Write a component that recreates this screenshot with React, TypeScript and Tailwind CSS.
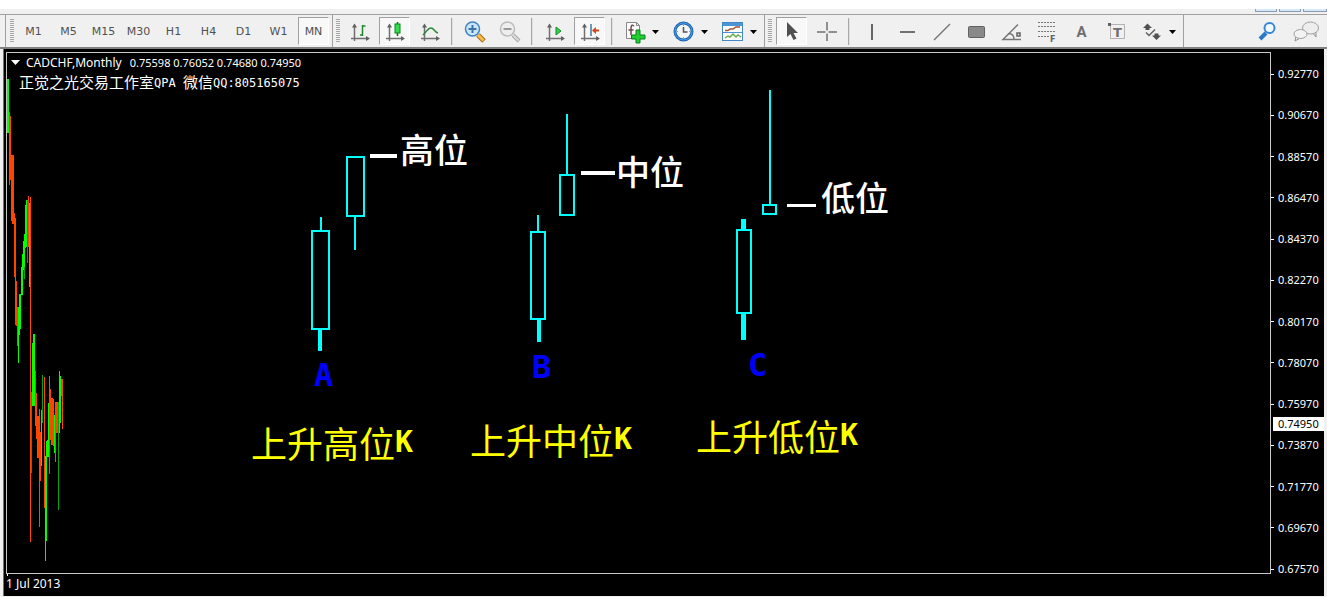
import type { ReactNode } from "react";

const timeframes = ["M1", "M5", "M15", "M30", "H1", "H4", "D1", "W1", "MN"];

const prices = [
  "0.92770", "0.90670", "0.88570", "0.86470", "0.84370", "0.82270", "0.80170",
  "0.78070", "0.75970", "0.73870", "0.71770", "0.69670", "0.67570",
];

const UP = "#00ff00";
const DOWN = "#ff4500";

// x, width, top, bottom, colour of each bar of the price history
const history: [number, number, number, number, string][] = [
  [0, 2, 26, 80, UP],
  [2, 1, 59, 132, DOWN],
  [3, 1, 63, 127, DOWN],
  [4, 1, 102, 168, DOWN],
  [5, 2, 102, 171, DOWN],
  [7, 1, 160, 224, DOWN],
  [8, 1, 165, 272, DOWN],
  [9, 1, 228, 273, DOWN],
  [10, 1, 254, 293, DOWN],
  [11, 1, 254, 310, UP],
  [12, 1, 241, 282, UP],
  [13, 1, 241, 276, UP],
  [14, 1, 214, 242, UP],
  [15, 1, 201, 242, UP],
  [16, 1, 188, 217, UP],
  [17, 1, 181, 214, UP],
  [17, 1, 214, 226, "#00a800"],
  [18, 1, 152, 195, UP],
  [19, 1, 147, 194, UP],
  [20, 1, 147, 210, "#00a800"],
  [21, 1, 143, 194, DOWN],
  [22, 1, 150, 234, UP],
  [23, 1, 144, 489, DOWN],
  [24, 1, 339, 420, "#00a800"],
  [25, 1, 290, 353, UP],
  [26, 2, 281, 353, UP],
  [28, 1, 318, 373, DOWN],
  [29, 1, 340, 386, DOWN],
  [30, 2, 363, 405, DOWN],
  [32, 1, 356, 474, DOWN],
  [33, 1, 379, 428, DOWN],
  [34, 1, 357, 413, UP],
  [35, 1, 322, 370, "#00a800"],
  [37, 1, 324, 455, DOWN],
  [38, 1, 403, 508, UP],
  [39, 1, 388, 488, UP],
  [40, 1, 387, 404, UP],
  [41, 1, 350, 404, UP],
  [42, 1, 323, 421, "#00c800"],
  [43, 1, 336, 387, DOWN],
  [44, 2, 345, 392, DOWN],
  [46, 1, 346, 393, DOWN],
  [47, 1, 362, 400, UP],
  [48, 1, 349, 409, DOWN],
  [49, 2, 349, 380, DOWN],
  [51, 1, 349, 457, "#00a800"],
  [52, 1, 318, 380, UP],
  [53, 1, 323, 370, UP],
  [54, 1, 326, 343, DOWN],
  [55, 1, 326, 376, DOWN],
];

function Icon({ children }: { children: ReactNode }) {
  return (
    <svg width="24" height="24" viewBox="0 0 24 24" fill="none" aria-hidden="true">
      {children}
    </svg>
  );
}

function Tool({ label, pressed, children }: { label: string; pressed?: boolean; children: ReactNode }) {
  return (
    <button
      type="button"
      aria-label={label}
      aria-pressed={pressed}
      className={
        "flex h-7 w-[31px] shrink-0 items-center justify-center border pt-0.5 text-[11px] text-[#505050] " +
        (pressed ? "border-t-[#a0a0a0] border-l-[#a0a0a0] border-r-white border-b-white bg-[#f8f8f8]" : "border-transparent")
      }
    >
      {children}
    </button>
  );
}

function DropTool({ label, children }: { label: string; children: ReactNode }) {
  return (
    <button type="button" aria-label={label} className="flex h-7 shrink-0 items-center pt-0.5">
      <span className="flex w-[31px] justify-center">{children}</span>
      <svg width="13" height="6" viewBox="0 0 13 6" aria-hidden="true">
        <path d="M2 1h7L5.500 5z" fill="#000" />
      </svg>
    </button>
  );
}

function Divider() {
  return <div className="mx-1.5 h-[27px] w-0.5 shrink-0 border-l border-[#a8a8a8] bg-[#e0e0e0]" />;
}

function Edge() {
  return <div className="mx-[3px] h-full w-px shrink-0 bg-[#a0a0a0]" />;
}

function Grip() {
  return (
    <div className="mr-1 h-6 w-1 shrink-0 bg-[repeating-linear-gradient(to_bottom,#a8a8a8_0px,#a8a8a8_1px,#f0f0f0_1px,#f0f0f0_2px)]" />
  );
}

function Axes() {
  return (
    <>
      <path d="M6.500 21V5M3 18.500h17" stroke="#707070" strokeWidth="1.500" />
      <path d="M4 7.500L6.500 3.500L9 7.500zM18 16l4 2.500-4 2.500z" fill="#606060" />
    </>
  );
}

function Toolbar() {
  return (
    <div role="toolbar" className="flex h-8 shrink-0 items-center overflow-hidden pl-[5px]">
      <div className="mr-1 h-full w-px shrink-0 bg-[#a0a0a0]" />
      <Grip />
      <div className="flex gap-1">
        {timeframes.map((t) => (
          <Tool key={t} label={t} pressed={t === "MN"}>
            {t}
          </Tool>
        ))}
      </div>
      <Edge />
      <Grip />
      <div className="flex gap-1">
        <Tool label="Bar chart">
          <Icon>
            <Axes />
            <path d="M14.500 5v11M14.500 6h3M12 15h3" stroke="#1c8a2c" strokeWidth="1.500" />
          </Icon>
        </Tool>
        <Tool label="Candlesticks" pressed>
          <Icon>
            <Axes />
            <path d="M14.500 2v14" stroke="#087018" strokeWidth="1.500" />
            <rect x="12" y="4" width="5" height="9" fill="#35dc4b" stroke="#078719" />
          </Icon>
        </Tool>
        <Tool label="Line chart">
          <Icon>
            <Axes />
            <path d="M5 15c3-3 5-7 8-7 3 0 3 4 7 5" stroke="#2f8a38" strokeWidth="1.500" />
          </Icon>
        </Tool>
      </div>
      <Divider />
      <div className="flex gap-1">
        <Tool label="Zoom in">
          <Icon>
            <path d="M15 15l6 6" stroke="#a66a16" strokeWidth="5" />
            <path d="M15 15l5.500 5.500" stroke="#f5bd4b" strokeWidth="3" />
            <circle cx="9.500" cy="9" r="7" fill="#c8e7fb" stroke="#4083c4" strokeWidth="1.500" />
            <path d="M9.500 5v8M5.500 9h8" stroke="#3f74a8" strokeWidth="2" />
          </Icon>
        </Tool>
        <Tool label="Zoom out">
          <Icon>
            <path d="M15 15l6 6" stroke="#a9a9a9" strokeWidth="4" />
            <path d="M15 15l5.500 5.500" stroke="#ddd" strokeWidth="2" />
            <circle cx="9.500" cy="9" r="7" fill="#eee" stroke="#bbb" strokeWidth="1.500" />
            <path d="M5.500 9h8" stroke="#999" strokeWidth="2" />
          </Icon>
        </Tool>
      </div>
      <Divider />
      <div className="flex gap-1">
        <Tool label="Auto scroll">
          <Icon>
            <Axes />
            <path d="M13 7l5 4-5 4z" fill="#32d348" stroke="#138b25" />
          </Icon>
        </Tool>
        <Tool label="Chart shift" pressed>
          <Icon>
            <Axes />
            <path d="M13 4v12" stroke="#3f78aa" strokeWidth="1.500" />
            <path d="M14 10.500l4-3.500v2.500h3v2h-3V14z" fill="#cf4617" />
          </Icon>
        </Tool>
      </div>
      <Divider />
      <div className="flex gap-[5px]">
        <DropTool label="Indicators">
          <Icon>
            <path d="M3.500 2.500h10l3 3v13h-13z" fill="#fafafa" stroke="#888" />
            <path d="M13.500 2.500v3h3" stroke="#888" />
            <path d="M11 6c-3-2-3 1-3 3v6M5.500 10h5" stroke="#70464a" strokeWidth="1.500" />
            <path d="M13 10h4v5h5v4h-5v4h-4v-4H8.500v-4H13z" fill="#23ce32" stroke="#07811a" />
          </Icon>
        </DropTool>
        <DropTool label="Periods">
          <Icon>
            <circle cx="11.500" cy="11.500" r="8.500" fill="#f4f5f7" stroke="#1a63b3" strokeWidth="3" />
            <circle cx="11.500" cy="11.500" r="8.500" stroke="#4ca2e5" />
            <path d="M11.500 7v5h4" stroke="#555" strokeWidth="1.500" />
            <path d="M11.500 5v1M11.500 17v1M5 11.500h1M17 11.500h1" stroke="#999" />
          </Icon>
        </DropTool>
        <DropTool label="Templates">
          <Icon>
            <rect x="1.500" y="2.500" width="20" height="18" fill="#fff" stroke="#4387c4" />
            <path d="M2 4.500h19" stroke="#4b94d5" strokeWidth="3" />
            <path d="M2 12.500h19" stroke="#4b94d5" />
            <path d="M4 10.500h3l2-1.500h3l3-2h4" stroke="#a35232" strokeWidth="1.500" />
            <path d="M4 18l3-2 2 1 3-3 3 3 2-2 3 2" stroke="#65ac4c" strokeWidth="1.500" />
          </Icon>
        </DropTool>
      </div>
      <Edge />
      <Grip />
      <div className="flex gap-1">
        <Tool label="Cursor" pressed>
          <Icon>
            <path d="M7 2v15l3.500-3 3 6 3-1.500-3-5.500H18z" fill="#505050" />
          </Icon>
        </Tool>
        <Tool label="Crosshair">
          <Icon>
            <path d="M12 2v8.500M12 13.500V21M2 12h8.500M13.500 12H22" stroke="#707070" strokeWidth="1.500" />
          </Icon>
        </Tool>
      </div>
      <Divider />
      <div className="flex gap-1">
        <Tool label="Vertical line">
          <Icon>
            <path d="M12 4v16" stroke="#666" strokeWidth="2" />
          </Icon>
        </Tool>
        <Tool label="Horizontal line">
          <Icon>
            <path d="M5 12h15" stroke="#707070" strokeWidth="2" />
          </Icon>
        </Tool>
        <Tool label="Trendline">
          <Icon>
            <path d="M4 20L20 4" stroke="#777" strokeWidth="1.500" />
          </Icon>
        </Tool>
        <Tool label="Rectangle">
          <Icon>
            <rect x="3.500" y="6.500" width="16" height="11" rx="1" fill="#898989" stroke="#606060" />
          </Icon>
        </Tool>
        <Tool label="Trend by angle">
          <Icon>
            <path d="M18 4.500L3 19.500h18" stroke="#777" strokeWidth="1.500" />
            <path d="M8 14c3-1 6 1 6 5" stroke="#777" strokeWidth="1.500" />
            <rect x="17" y="13" width="3" height="3" stroke="#606060" strokeWidth="1.500" />
          </Icon>
        </Tool>
        <Tool label="Fibonacci">
          <Icon>
            <path d="M3 2.500h17M3 6.500h17M3 11.500h17M3 16.500h12" stroke="#777" strokeDasharray="2 1" />
            <text x="15" y="22" fill="#606060" fontSize="8" fontWeight="bold">F</text>
          </Icon>
        </Tool>
        <Tool label="Text">
          <span className="text-[15px] leading-4 font-bold text-[#6e6e6e] [font-family:Roboto,sans-serif]">A</span>
        </Tool>
        <Tool label="Text label">
          <Icon>
            <rect x="5.500" y="4.500" width="14" height="14" stroke="#777" strokeDasharray="1 1" />
            <rect x="3" y="3" width="3" height="3" fill="#606060" />
            <text x="8" y="17" fill="#707070" fontSize="13" fontWeight="bold">T</text>
          </Icon>
        </Tool>
        <DropTool label="Arrows">
          <Icon>
            <path d="M7.500 3.500L12 8h-2.500v2h-4V8H3z" fill="#505050" />
            <path d="M16.500 20L12 15.500h2.500v-2h4v2H21z" fill="#505050" />
            <path d="M6 12.500l3 3 6-6" stroke="#606060" strokeWidth="1.500" />
          </Icon>
        </DropTool>
      </div>
      <Edge />
      <div className="mr-1.5 ml-auto flex gap-[7px]">
        <Tool label="Search">
          <Icon>
            <path d="M4 19l6-6" stroke="#2a79c9" strokeWidth="4" />
            <circle cx="13.500" cy="8" r="5" fill="#f1f8ff" stroke="#3386d6" strokeWidth="2" />
          </Icon>
        </Tool>
        <Tool label="Chat">
          <svg width="28" height="24" viewBox="0 0 28 24" fill="none" aria-hidden="true" className="shrink-0">
            <path d="M20 12l4 5v-6" fill="#eee" stroke="#909090" />
            <ellipse cx="18.500" cy="8" rx="8" ry="6" fill="#eee" stroke="#a0a0a0" />
            <path d="M4 16l-1 5 5-3" fill="#f3f3f3" stroke="#909090" />
            <ellipse cx="8.500" cy="14" rx="6.500" ry="4.500" fill="#f3f3f3" stroke="#a0a0a0" />
          </svg>
        </Tool>
      </div>
    </div>
  );
}

function Drawing() {
  return (
    <svg className="absolute inset-0 h-full w-full" shapeRendering="crispEdges" aria-hidden="true">
      {history.map(([x, w, top, bottom, color], i) => (
        <rect key={i} x={x} y={top} width={w} height={bottom - top} fill={color} />
      ))}
      <g fill="none" stroke="#00ffff" strokeWidth="2">
        <rect x="305" y="178" width="17" height="98" />
        <rect x="340" y="104" width="17" height="59" />
        <rect x="524" y="179" width="14" height="87" />
        <rect x="553" y="122" width="14" height="40" />
        <rect x="730" y="177" width="14" height="83" />
        <rect x="756" y="152" width="13" height="9" />
        <path d="M314 164v13M348 164v33M531 162v17M560 61v60M763 37v114" />
        <path strokeWidth="4" d="M313 277v21M532 267v22" />
        <path strokeWidth="5" d="M736.500 166v10M736.500 261v26" />
      </g>
      <g fill="#ffffff">
        <rect x="363" y="101" width="27" height="4" />
        <rect x="574" y="118" width="34" height="4" />
        <rect x="780" y="151" width="29" height="3" />
      </g>
    </svg>
  );
}

function Note({ place, children }: { place: string; children: ReactNode }) {
  return <span className={"absolute text-[34px] leading-10 font-medium whitespace-nowrap text-white " + place}>{children}</span>;
}

function Letter({ place, children }: { place: string; children: ReactNode }) {
  return (
    <span
      className={
        "absolute text-[32px] leading-8 font-bold text-[#0000ff] [font-family:'DejaVu_Sans_Mono',monospace] " + place
      }
    >
      {children}
    </span>
  );
}

function Caption({ place, children }: { place: string; children: ReactNode }) {
  return (
    <span className={"absolute flex items-center text-[36px] leading-10 whitespace-nowrap text-[#ffff00] " + place}>
      {children}
      <b className="text-[30px] leading-9 [font-family:'DejaVu_Sans_Mono',monospace]">K</b>
    </span>
  );
}

function Chart() {
  return (
    <main className="mr-[3px] mb-px ml-[3px] flex min-h-[500px] flex-1 flex-col border-l border-[#707070] bg-black pt-[3px] pl-0.5 text-[11px] text-white [font-family:'Noto_Sans',sans-serif]">
      <div className="flex flex-1">
        <div className="relative flex-1 overflow-hidden border border-[#c8c8c8] [font-family:'Noto_Sans_CJK_SC',sans-serif]">
          <Drawing />
          <header className="relative pt-0.5 pl-1 [font-family:'Noto_Sans',sans-serif]">
            <h1 className="flex items-center leading-4 whitespace-pre">
              <svg width="15" height="6" viewBox="0 0 15 6" aria-hidden="true">
                <path d="M0 0h9L4.500 5z" fill="#fff" />
              </svg>
              <span className="mr-2 text-[12px]">CADCHF,Monthly</span>
              0.75598 0.76052 0.74680 0.74950
            </h1>
            <p className="flex items-center pt-0.5 pl-2 text-[12px] leading-5 whitespace-pre [font-family:'DejaVu_Sans_Mono','Noto_Sans_CJK_SC',monospace]">
              <span className="text-[15px]">正觉之光交易工作室</span>
              {"QPA "}
              <span className="text-[15px]">微信</span>QQ:805165075
            </p>
          </header>
          <Note place="top-[76px] left-[393px]">高位</Note>
          <Note place="top-[98px] left-[609px]">中位</Note>
          <Note place="top-[124px] left-[814px]">低位</Note>
          <Letter place="top-[306px] left-[307px]">A</Letter>
          <Letter place="top-[298px] left-[525px]">B</Letter>
          <Letter place="top-[296px] left-[741px]">C</Letter>
          <Caption place="top-[369px] left-[244px]">上升高位</Caption>
          <Caption place="top-[366px] left-[463px]">上升中位</Caption>
          <Caption place="top-[362px] left-[689px]">上升低位</Caption>
        </div>
        <div className="relative w-[53px] shrink-0">
          <ol className="-mb-[3px] flex h-[calc(100%+3px)] flex-col justify-between pt-[14px]">
            {prices.map((p) => (
              <li key={p} className="flex items-center gap-1 leading-4">
                <i className="h-px w-[3px] bg-white" />
                {p}
              </li>
            ))}
          </ol>
          <output className="absolute top-[70%] right-0 left-0.5 bg-white pl-[5px] leading-[14px] text-black">0.74950</output>
        </div>
      </div>
      <footer className="flex h-[22px] shrink-0 flex-col">
        <i className="ml-px h-0.5 w-px bg-white" />
        <time dateTime="2013-07-01" className="text-[12px] leading-4">1 Jul 2013</time>
      </footer>
    </main>
  );
}

export default function App() {
  return (
    <div className="flex min-h-screen flex-col bg-[#f0f0f0] [font-family:'DejaVu_Sans',sans-serif]">
      <div className="h-[9px] shrink-0 bg-white" />
      <div className="flex h-1.5 shrink-0 justify-end gap-0.5 border-b border-[#a0a0a0]">
        <i className="h-[3px] w-[22px] border border-t-0 border-[#8a9cad] bg-[#d5e8f8]" />
        <i className="h-[3px] w-[22px] border border-t-0 border-[#8a9cad] bg-[#d5e8f8]" />
        <i className="h-[3px] w-6 border border-t-0 border-[#8a9cad] bg-[#d5e8f8]" />
      </div>
      <Toolbar />
      <div className="h-0.5 shrink-0 bg-[#808080]" />
      <Chart />
    </div>
  );
}
